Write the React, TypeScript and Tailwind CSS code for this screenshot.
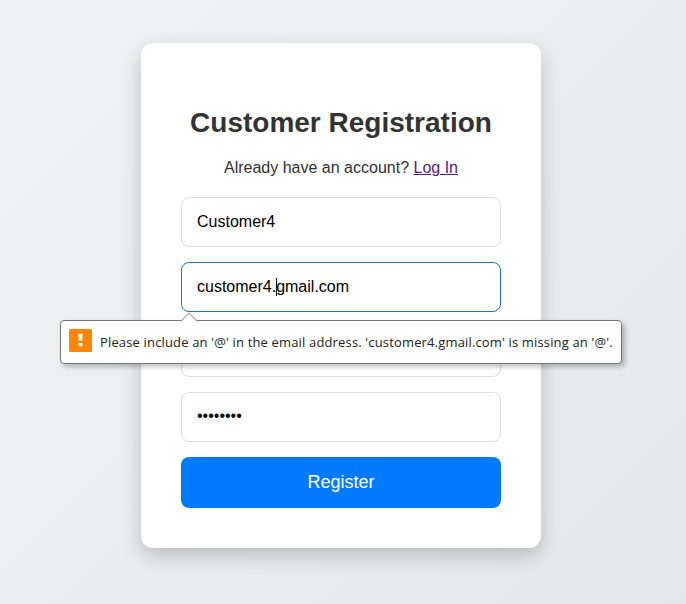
const field =
  'flex h-[50px] w-full items-center rounded-lg border border-[#ddd] bg-white px-[15px] text-base text-black';

function ValidationBubble() {
  return (
    <div
      role="alert"
      className="absolute left-[-121px] top-[58px] z-10 flex h-[44px] w-[562px] items-center rounded-[4px] border border-[#767676] bg-white pl-2 shadow-[3px_3px_5px_rgba(0,0,0,0.25)]"
    >
      <svg className="absolute left-[119px] top-[-9px]" width="18" height="10" viewBox="0 0 18 10">
        <path d="M1 9.5 9 1l8 8.5V10H1Z" fill="#fff" />
        <path d="M1 9 9 1l8 8" fill="none" stroke="#aaa" strokeWidth="1.2" />
      </svg>
      <svg className="mb-[3px] shrink-0" width="23" height="23" viewBox="0 0 23 23">
        <rect width="23" height="23" rx="1.5" fill="#ff8500" />
        <path d="M9.3 4.7h4.3l-.4 6.8H9.7ZM9.5 14h3.9v3.3H9.5Z" fill="#fff" />
      </svg>
      <span className="ml-2 whitespace-nowrap font-['Open_Sans','Noto_Sans',sans-serif] text-[13px] leading-5 tracking-[0.155px] text-[#222]">
        Please include an '@' in the email address. 'customer4.gmail.com' is missing an '@'.
      </span>
    </div>
  );
}

export default function App() {
  return (
    <main className="flex h-[604px] w-full flex-col overflow-hidden bg-linear-135 from-[#f0f2f5] to-[#e6e7eb] pl-[141px] pt-[43px] font-['Liberation_Sans',Arial,sans-serif]">
      <section className="h-[505px] w-[400px] rounded-xl bg-white px-10 pt-[62px] text-center shadow-[0_8px_20px_rgba(0,0,0,0.2)]">
        <h1 className="text-[28px] font-bold leading-9 text-[#333]">Customer Registration</h1>
        <p className="mt-[18px] text-base leading-[18px] text-[#333]">
          Already have an account?{' '}
          <a href="#" className="text-[#551a8b] underline">Log In</a>
        </p>
        <form className="mt-5 flex flex-col gap-[15px]">
          <div className={field}>Customer4</div>
          <div className="relative">
            <div className="flex h-[50px] w-full items-center rounded-lg border border-[#1976c8] bg-white px-[15px] text-base text-black">
              <span>customer4.</span>
              <span className="-mr-px h-[18px] w-px bg-black" />
              <span>gmail.com</span>
            </div>
            <ValidationBubble />
          </div>
          <div className={field} />
          <div className={field}>
            <span className="pb-0.5">••••••••</span>
          </div>
          <button type="button" className="h-[51px] w-full rounded-lg bg-[#007bff] pb-0.5 text-lg text-white">
            Register
          </button>
        </form>
      </section>
    </main>
  );
}
